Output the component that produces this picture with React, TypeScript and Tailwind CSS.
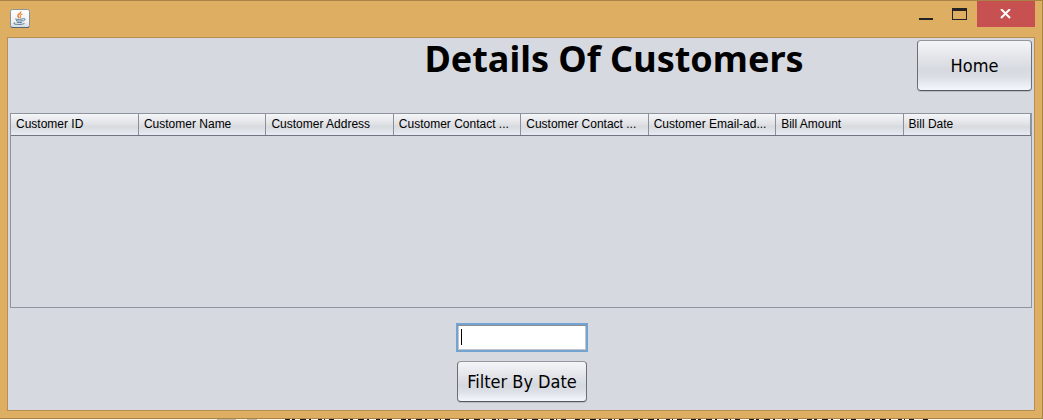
import React from "react";

const columns = [
  "Customer ID",
  "Customer Name",
  "Customer Address",
  "Customer Contact ...",
  "Customer Contact ...",
  "Customer Email-ad...",
  "Bill Amount",
  "Bill Date",
];

const font = "font-['DejaVu_Sans_Condensed','DejaVu_Sans',sans-serif]";

const buttonFace =
  "rounded-[4px] border border-[#6b6e75] border-t-[#93959b] border-b-[#55585e] bg-[linear-gradient(to_bottom,#f4f5f7_0%,#e2e4e9_35%,#d6d9e0_60%,#dcdfe6_75%,#f4f7fc_100%)] shadow-[0_1px_0_#b9bcc5] text-lg leading-6 text-black";

function JavaIcon() {
  return (
    <svg width="20" height="19" viewBox="0 0 20 19" aria-hidden="true">
      <defs>
        <linearGradient id="tile" x1="0" y1="0" x2="0" y2="1">
          <stop offset="0" stopColor="#ffffff" />
          <stop offset="0.7" stopColor="#f0f0f0" />
          <stop offset="1" stopColor="#d2d9df" />
        </linearGradient>
      </defs>
      <rect x="0.5" y="0.5" width="19" height="18" rx="2" fill="url(#tile)" stroke="#8b9299" />
      <path d="M1 17.8Q1 18.5 2 18.5H18Q19 18.5 19 17.8" fill="none" stroke="#4d687c" />
      <path d="M10.8 2.5C11.4 4.4 7.3 5.3 7.8 7C8 7.8 9 8.3 9 9" fill="none" stroke="#e8792b" strokeWidth="1.4" />
      <path d="M12.6 5C10.5 5.7 9.8 6.3 10.6 7.5C11 8.2 10.5 8.7 10 9.2" fill="none" stroke="#e99045" strokeWidth="1.1" />
      <path d="M5.5 9.6C4 10.5 11 10.6 13 9.8M6 11.5C8 12.2 11 12.2 12.7 11.5M6.6 13C8 13.8 11 13.7 12.3 13M13.2 9.7C15.8 9 15.5 11.3 13.2 12M5 13.6C1.6 14.8 6 15.5 9 15.4C12.8 15.4 15 14.7 13.8 14" fill="none" stroke="#547b96" strokeWidth="1" />
    </svg>
  );
}

function TitleBar() {
  return (
    <header className="flex h-9 items-start justify-between">
      <div className="pt-2 pl-[3px]">
        <JavaIcon />
      </div>
      <div className="flex">
        <button aria-label="Minimize" className="flex h-[26px] w-[30px] items-center justify-center">
          <svg width="14" height="14" viewBox="0 0 14 14" aria-hidden="true">
            <path d="M0 11h14v2H0z" fill="#232323" />
          </svg>
        </button>
        <button aria-label="Maximize" className="flex h-[26px] w-9 items-center justify-center">
          <svg width="15" height="12" viewBox="0 0 15 12" aria-hidden="true">
            <path fillRule="evenodd" d="M0 0h15v12H0zM1 3v8h13V3z" fill="#232323" />
          </svg>
        </button>
        <button aria-label="Close" className="flex h-[26px] w-[58px] items-center justify-center bg-[#c75050]">
          <svg width="12" height="10" viewBox="0 0 12 10" aria-hidden="true">
            <path d="M1 0l9 9M10 0L1 9" stroke="#ffffff" strokeWidth="2" />
          </svg>
        </button>
      </div>
    </header>
  );
}

function CustomerTable() {
  return (
    <div className="mx-0.5 flex-1 border border-[#8f949e]">
      <table className="w-full table-fixed border-collapse">
        <thead>
          <tr>
            {columns.map((name, index) => (
              <th
                key={index}
                scope="col"
                className="h-[21px] overflow-hidden border-r border-b border-r-[#8d9098] border-b-[#6f7480] bg-[linear-gradient(to_bottom,#f5f6f8_0%,#e1e3e7_45%,#d7dade_60%,#e8ebf2_100%)] pl-[5px] text-left font-['Liberation_Sans',Arial,sans-serif] text-xs leading-4 font-normal whitespace-nowrap text-black"
              >
                {name}
              </th>
            ))}
          </tr>
        </thead>
        <tbody />
      </table>
    </div>
  );
}

export default function App() {
  return (
    <div className={`flex min-h-screen flex-col bg-[#fdf5ea] ${font}`}>
      <div className="flex flex-1 flex-col border-t border-r border-b border-[#a88345] bg-[#deae63] pr-[7px] pb-[7px] pl-[7px]">
        <TitleBar />
        <main className="flex flex-1 flex-col border border-[#b78f51] bg-[#d6d9e0]">
          <div className="grid grid-cols-[1fr_2fr_auto] items-start pt-0.5 pr-0.5 pb-[22px]">
            <h1 className="col-start-2 text-center font-['Noto_Sans','DejaVu_Sans',sans-serif] text-4xl leading-[38px] font-bold whitespace-nowrap text-black">
              Details Of Customers
            </h1>
            <button className={`h-[51px] w-[115px] ${buttonFace}`}>Home</button>
          </div>
          <CustomerTable />
          <form className="flex flex-col items-center gap-[9px] pt-[15px] pb-2 pl-0.5" onSubmit={(e) => e.preventDefault()}>
            <div className="relative flex">
              <input
                type="text"
                aria-label="Date"
                className="h-[29px] w-[132px] border-2 border-[#73a4d1] bg-white px-1 text-lg leading-6 text-black shadow-[inset_0_1px_0_#8d8e91,inset_0_0_0_1px_#c3c5ca] outline-none"
              />
              <span className="pointer-events-none absolute top-1.5 left-[5px] h-4 w-px bg-black" />
            </div>
            <button className={`h-[41px] w-[130px] ${buttonFace}`}>Filter By Date</button>
          </form>
        </main>
      </div>
      <svg className="h-px w-full" aria-hidden="true">
        <path d="M217 0.5h19M247 0.5h10" stroke="#c0b7aa" />
        <path
          d="M285 0.5h645"
          stroke="#1d1720"
          strokeDasharray="5 2 3 5 6 3 2 7 4 2 1 4 5 9"
        />
      </svg>
    </div>
  );
}
